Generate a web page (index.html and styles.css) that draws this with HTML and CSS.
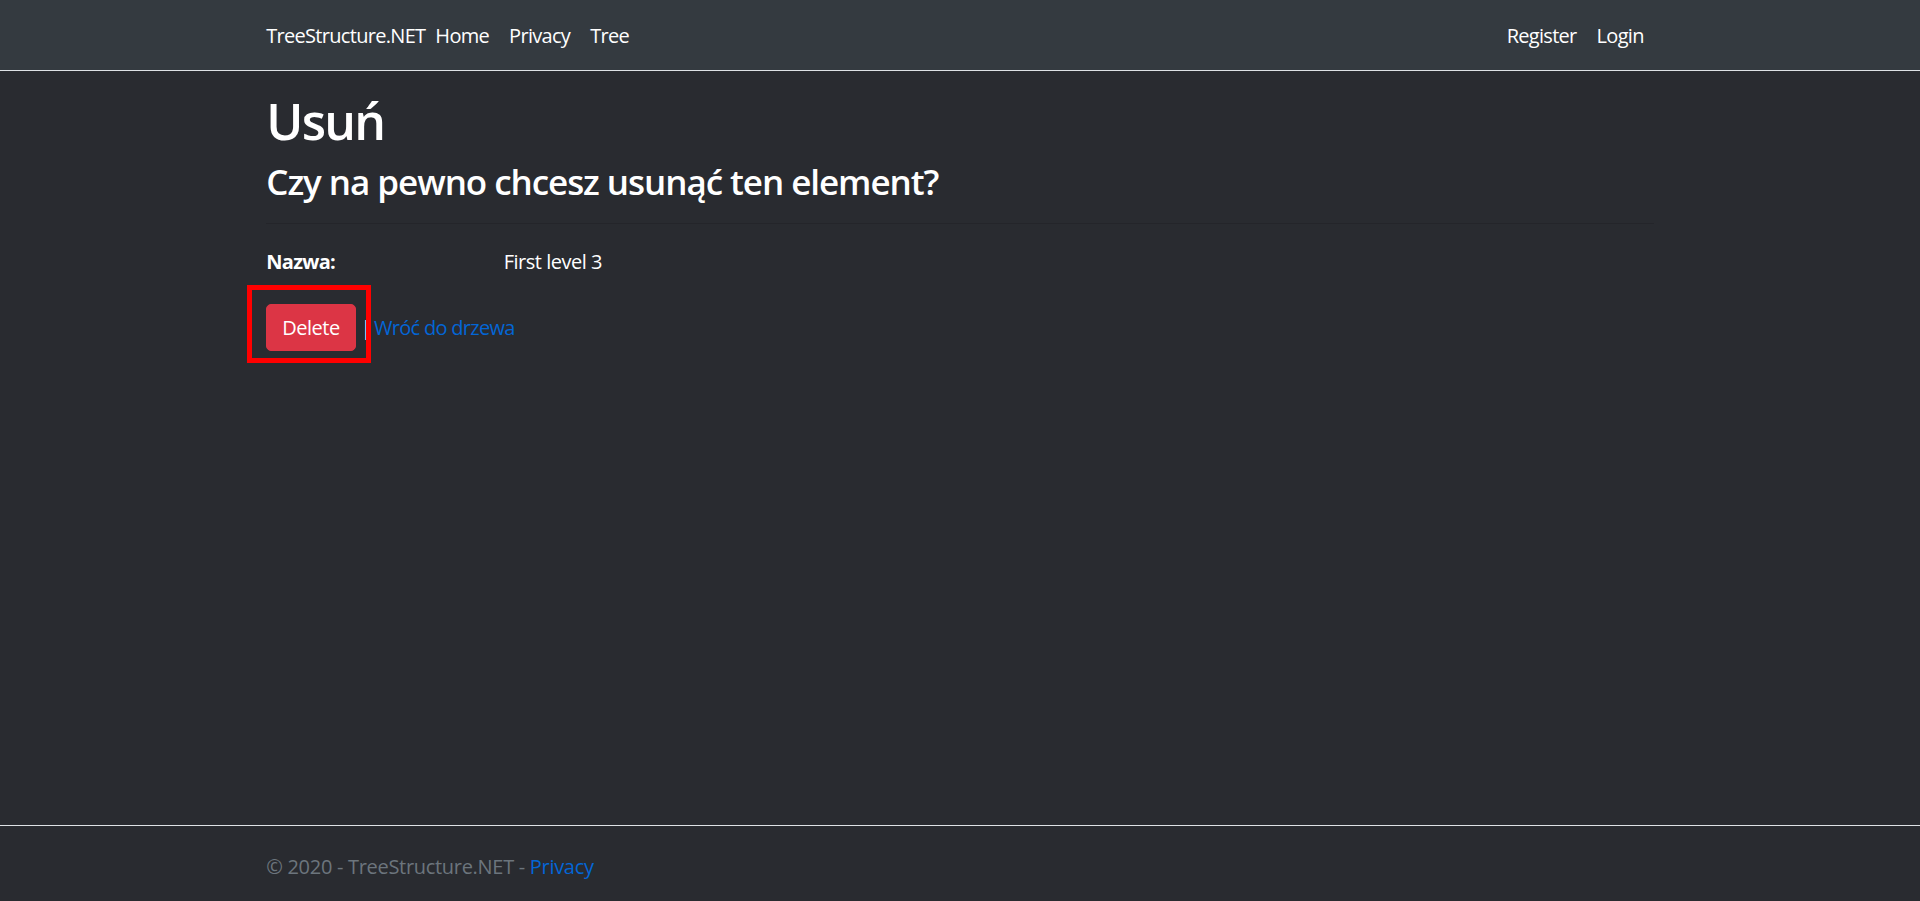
FILE: index.html
```html
<!DOCTYPE html>
<html lang="pl">
<head>
<meta charset="utf-8">
<title>Usuń - TreeStructure.NET</title>
<link rel="stylesheet" href="styles.css">
</head>
<body>
<header class="site-header">
  <nav class="navbar">
    <div class="container nav-inner">
      <a class="brand" href="#">TreeStructure.NET</a>
      <ul class="nav-list nav-main">
        <li><a class="nav-link" href="#">Home</a></li>
        <li><a class="nav-link" href="#">Privacy</a></li>
        <li><a class="nav-link" href="#">Tree</a></li>
      </ul>
      <ul class="nav-list nav-auth">
        <li><a class="nav-link" href="#">Register</a></li>
        <li><a class="nav-link" href="#">Login</a></li>
      </ul>
    </div>
  </nav>
</header>

<div class="container page">
  <main class="content">
    <h1 class="title">Usuń</h1>
    <h3 class="subtitle">Czy na pewno chcesz usunąć ten element?</h3>
    <div class="details">
      <hr class="divider">
      <dl class="detail-row">
        <dt class="detail-label">Nazwa:</dt>
        <dd class="detail-value">First level 3</dd>
      </dl>
      <form class="delete-form" action="#" onsubmit="return false;">
        <span class="btn-wrap"><button type="submit" class="btn btn-danger">Delete</button><span class="annotation"></span></span><span class="sep">|</span><a class="back-link" href="#">Wróć do drzewa</a>
      </form>
    </div>
  </main>
</div>

<footer class="site-footer">
  <div class="container">
    &copy; 2020 - TreeStructure.NET - <a class="footer-link" href="#">Privacy</a>
  </div>
</footer>
</body>
</html>
```

FILE: styles.css
```css
* {
  box-sizing: border-box;
}

html {
  font-size: 20px;
}

body {
  margin: 0;
  min-height: 100vh;
  display: flex;
  flex-direction: column;
  background: #292b30;
  color: #ffffff;
  font-family: "Open Sans", "Noto Sans", sans-serif;
  font-size: 20px;
  line-height: 1.5;
  letter-spacing: -0.035em;
}

a {
  text-decoration: none;
}

.container {
  width: 100%;
  max-width: 1425px;
  padding: 0 18.75px;
  margin: 0 auto;
}

/* Navbar */
.navbar {
  background: #343a40;
  border-bottom: 1px solid #dee2e6;
  padding: 10px 20px;
  margin-bottom: 20px;
}

.nav-inner {
  display: flex;
  align-items: center;
  height: 50px;
  padding-top: 2px;
}

.brand {
  color: #ffffff;
  margin-right: 0;
  line-height: 30px;
  white-space: nowrap;
}

.nav-list {
  list-style: none;
  margin: 0;
  padding: 0;
  display: flex;
}

.nav-main {
  flex: 1;
}

.nav-link {
  display: block;
  padding: 10px;
  color: #ffffff;
  line-height: 30px;
}

/* Content */
.page {
  flex: 1;
}

.title {
  margin: 0 0 10px;
  font-size: 50px;
  font-weight: 600;
  line-height: 1.2;
  letter-spacing: -0.035em;
}

.subtitle {
  margin: 0 0 10px;
  font-size: 35px;
  font-weight: 600;
  line-height: 1.2;
  letter-spacing: -0.03em;
}

.divider {
  margin: 20px 0 23px;
  border: 0;
  border-top: 1px solid rgba(0, 0, 0, 0.12);
}

.detail-row {
  display: flex;
  margin: 0 0 20px;
}

.detail-label {
  width: 237.5px;
  font-weight: 700;
}

.detail-value {
  margin: 0 0 7px;
  letter-spacing: -0.025em;
}

.delete-form {
  margin: 0;
}

.btn-wrap {
  position: relative;
  display: inline-block;
}

.btn {
  display: inline-block;
  font-family: inherit;
  font-size: 20px;
  letter-spacing: -0.025em;
  line-height: 30px;
  padding: 7.5px 15px;
  border-radius: 5px;
  cursor: pointer;
}

.btn-danger {
  background: #dc3545;
  border: 1.25px solid #dc3545;
  color: #ffffff;
}

.annotation {
  position: absolute;
  left: -19px;
  top: -19px;
  width: 124px;
  height: 78px;
  border: 5px solid #ff0000;
  pointer-events: none;
}

.sep {
  margin-left: 5px;
  color: #ffffff;
  font-weight: 600;
}

.back-link {
  color: #0366d6;
  margin-left: 3px;
}

/* Footer */
.site-footer {
  border-top: 1px solid #dee2e6;
  padding-top: 6px;
  line-height: 69px;
  color: #6c757d;
  white-space: nowrap;
  letter-spacing: -0.015em;
}

.footer-link {
  color: #0366d6;
}
```
